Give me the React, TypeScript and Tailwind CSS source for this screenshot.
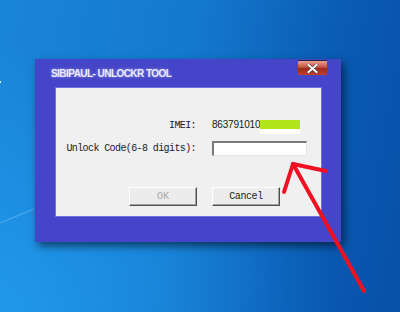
import React from "react";

export default function App() {
  return (
    <div className="relative w-[400px] h-[312px] overflow-hidden bg-[linear-gradient(100deg,#1a86d8_0%,#1478cc_45%,#0a5cb4_75%,#0850a8_100%)]">
      <div className="absolute inset-0 bg-[radial-gradient(ellipse_at_0%_100%,rgba(40,170,255,0.55)_0%,rgba(40,170,255,0)_60%)]" />
      <svg className="absolute left-0 top-0" width="400" height="312">
        <line x1="0" y1="223" x2="34" y2="209" stroke="rgba(200,230,255,0.35)" strokeWidth="1" />
        <rect x="0" y="81" width="1" height="2" fill="#e0f0ff" />
      </svg>

      {/* window */}
      <div className="absolute left-[35px] top-[59px] w-[306px] h-[183px] bg-[#4545c9] shadow-[3px_4px_8px_rgba(0,0,0,0.55)] flex flex-col">
        <div className="relative h-[28px] flex items-center pl-[16px] pt-[1px]">
          <span className="text-[10px] font-bold tracking-[-0.55px] text-[#ececff] [font-family:'Liberation_Sans',Arial,sans-serif] [text-shadow:0_0_3px_rgba(220,220,255,0.6)]">
            SIBIPAUL- UNLOCKR TOOL
          </span>
          <div className="absolute left-[263px] top-[1px] w-[29px] h-[15px] border-t border-[#202040] bg-[linear-gradient(180deg,#e8a090_0%,#c85040_45%,#a02818_55%,#c04030_100%)] flex items-center justify-center">
            <svg width="11" height="9" viewBox="0 0 11 9">
              <path d="M1.5 1 L9.5 8 M9.5 1 L1.5 8" stroke="#404040" strokeWidth="3.2" strokeLinecap="square" />
              <path d="M1.5 1 L9.5 8 M9.5 1 L1.5 8" stroke="#ffffff" strokeWidth="2" strokeLinecap="square" />
            </svg>
          </div>
        </div>

        {/* panel */}
        <div className="ml-[20px] w-[267px] h-[130px] bg-[#f0f0f0] border border-[#7070e0] flex flex-col pt-[30px]">
          <div className="grid grid-cols-[140px_auto] gap-x-[16px] gap-y-[8px] items-center">
            <div className="h-[15px] flex items-center justify-end text-[10px] tracking-[-0.6px] text-[#202020] [font-family:'Liberation_Mono',monospace]">
              IMEI:
            </div>
            <div className="h-[15px] flex items-start">
              <span className="text-[10px] leading-[14px] tracking-[-0.2px] text-[#202020] [font-family:'Liberation_Sans',Arial,sans-serif]">
                863791010
              </span>
              <div className="flex flex-col mt-[2px]">
                <div className="w-[40px] h-[9px] bg-[#b2e41a]" />
                <div className="w-[40px] h-[5px] bg-white" />
              </div>
            </div>
            <div className="h-[15px] flex items-center justify-end text-[10px] tracking-[-0.6px] text-[#202020] [font-family:'Liberation_Mono',monospace]">
              Unlock Code(6-8 digits):
            </div>
            <div className="w-[95px] h-[15px] bg-white border-t-2 border-l-2 border-t-[#7a7a7a] border-l-[#7a7a7a] border-b border-r border-b-[#e4e4e4] border-r-[#e4e4e4]" />
          </div>

          <div className="flex gap-[15px] pl-[73px] mt-[31px]">
            <div className="w-[68px] h-[19px] bg-[#ececec] border border-t-white border-l-white border-b-[#505050] border-r-[#505050] shadow-[inset_-1px_-1px_0_#a0a0a0] flex items-center justify-center text-[10px] text-[#a8a8a8] [font-family:'Liberation_Mono',monospace]">
              OK
            </div>
            <div className="w-[68px] h-[19px] bg-[#ececec] border border-t-white border-l-white border-b-[#505050] border-r-[#505050] shadow-[inset_-1px_-1px_0_#a0a0a0] flex items-center justify-center text-[10px] tracking-[-0.4px] text-[#202020] [font-family:'Liberation_Mono',monospace]">
              Cancel
            </div>
          </div>
        </div>
      </div>

      {/* red arrow */}
      <svg className="absolute left-0 top-0" width="400" height="312">
        <g stroke="#ee1122" strokeWidth="4" strokeLinecap="round" fill="none">
          <line x1="293" y1="164" x2="364" y2="291" />
          <line x1="293" y1="164" x2="284" y2="192" />
          <line x1="293" y1="164" x2="326" y2="171" />
        </g>
      </svg>
    </div>
  );
}
